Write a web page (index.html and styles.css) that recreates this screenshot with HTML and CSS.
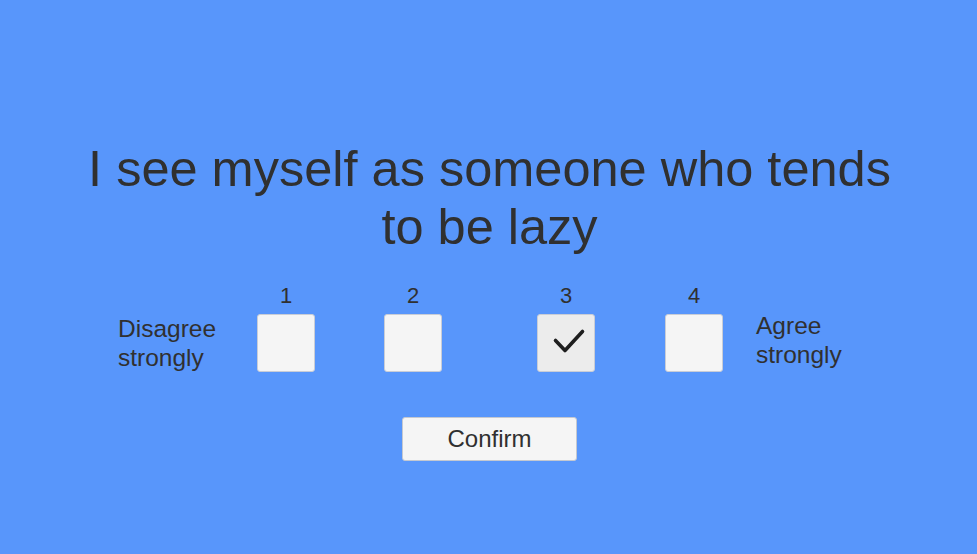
FILE: index.html
```html
<!DOCTYPE html>
<html lang="en">
<head>
<meta charset="utf-8">
<title>Survey</title>
<link rel="stylesheet" href="styles.css">
</head>
<body>
<main class="screen">
  <h1 class="question">I see myself as someone who tends<br>to be lazy</h1>
  <div class="scale">
    <div class="label label-left">Disagree<br>strongly</div>
    <div class="option opt1">
      <span class="num">1</span>
      <span class="box"></span>
    </div>
    <div class="option opt2">
      <span class="num">2</span>
      <span class="box"></span>
    </div>
    <div class="option opt3">
      <span class="num">3</span>
      <span class="box checked">
        <svg width="58" height="58" viewBox="0 0 58 58"><path d="M18.5 26.5 L28 36.5 L45.5 17.5" fill="none" stroke="#1e1e1e" stroke-width="3.6" stroke-linecap="round" stroke-linejoin="round"/></svg>
      </span>
    </div>
    <div class="option opt4">
      <span class="num">4</span>
      <span class="box"></span>
    </div>
    <div class="label label-right">Agree<br>strongly</div>
  </div>
  <button class="confirm">Confirm</button>
</main>
</body>
</html>
```

FILE: styles.css
```css
html, body {
  margin: 0;
  padding: 0;
}
body {
  width: 977px;
  height: 554px;
  background: #5896fb;
  font-family: "Liberation Sans", Arial, sans-serif;
  color: #303030;
  overflow: hidden;
}
.screen {
  display: flex;
  flex-direction: column;
  align-items: center;
  padding-top: 140px;
}
.question {
  margin: 0;
  font-size: 50.5px;
  font-weight: normal;
  line-height: 58px;
  text-align: center;
  padding-left: 2px;
}
.scale {
  align-self: stretch;
  display: flex;
  align-items: flex-end;
  padding-left: 118px;
  margin-top: 29px;
}
.label {
  font-size: 24.5px;
  line-height: 29px;
  height: 58px;
}
.label-left {
  width: 139px;
}
.label-right {
  margin-left: 33px;
  margin-bottom: 3px;
}
.option {
  display: flex;
  flex-direction: column;
  align-items: center;
  width: 58px;
}
.opt2 { margin-left: 69px; }
.opt3 { margin-left: 95px; }
.opt4 { margin-left: 70px; }
.num {
  font-size: 22px;
  line-height: 22px;
  margin-bottom: 7px;
}
.box {
  box-sizing: border-box;
  width: 58px;
  height: 58px;
  background: #f5f5f5;
  border: 1px solid #c9cdd6;
  border-radius: 3px;
  display: block;
}
.box.checked {
  background: #ececec;
}
.box svg {
  display: block;
  margin: -1px;
}
.confirm {
  box-sizing: border-box;
  margin-top: 45px;
  margin-left: 2px;
  width: 175px;
  height: 44px;
  background: #f5f5f5;
  border: 1px solid #c4c8d0;
  border-radius: 3px;
  font-family: "Liberation Sans", Arial, sans-serif;
  font-size: 24px;
  color: #303030;
  padding: 0;
}
```
